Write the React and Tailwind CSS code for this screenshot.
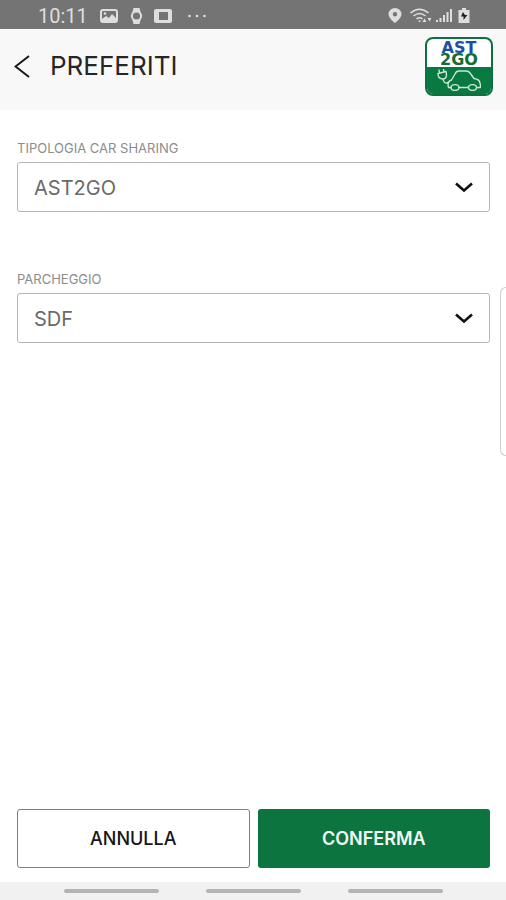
function StatusBar() {
  return (
    <div className="flex h-[29px] shrink-0 items-center justify-between bg-[#747474] pt-[2px] pr-9 pl-[38px] font-[Roboto,sans-serif] text-[#dedede]">
      <div className="flex items-center">
        <span className="w-[62px] text-[20px] leading-6">10:11</span>
        <svg className="h-[14px] w-[18px]" viewBox="0 0 18 14" aria-hidden="true">
          <rect x="1" y="1" width="16" height="12" rx="2" fill="none" stroke="currentColor" strokeWidth="2" />
          <path d="M2 12V10l4-3 3 2 3-4 4 4v3z" fill="currentColor" />
          <circle cx="5" cy="4.500" r="1.300" fill="currentColor" />
        </svg>
        <svg className="ml-3 h-4 w-[13px]" viewBox="0 0 13 16" aria-hidden="true">
          <path d="M3.500 0h6l1 4h-8zM2.500 12h8l-1 4h-6z" fill="currentColor" />
          <circle cx="6.500" cy="8" r="4.600" fill="#747474" stroke="currentColor" strokeWidth="2" />
        </svg>
        <svg className="ml-[11px] h-[14px] w-[18px]" viewBox="0 0 18 14" aria-hidden="true">
          <rect width="18" height="14" rx="2" fill="currentColor" />
          <rect x="5" y="3" width="9" height="8" fill="#747474" />
        </svg>
        <svg className="ml-4 h-1 w-[18px]" viewBox="0 0 18 4" fill="currentColor" aria-hidden="true">
          <circle cx="1.500" cy="2" r="1.300" />
          <circle cx="9" cy="2" r="1.300" />
          <circle cx="16.500" cy="2" r="1.300" />
        </svg>
      </div>
      <div className="flex items-center">
        <svg className="h-[15px] w-[14px]" viewBox="0 0 14 15" aria-hidden="true">
          <path fillRule="evenodd" d="M7 0A6.500 6.200 0 0 0 .5 6.200c0 4 6.500 8.800 6.500 8.800s6.500-4.800 6.500-8.800A6.500 6.200 0 0 0 7 0zm0 4a2.200 2.200 0 1 1 0 4.400A2.200 2.200 0 0 1 7 4z" fill="currentColor" />
        </svg>
        <svg className="ml-[8px] h-4 w-[22px]" viewBox="0 0 22 16" fill="none" stroke="currentColor" strokeWidth="1.600" aria-hidden="true">
          <path d="M.5 5Q9.500-2.500 18.500 5M3.500 8q6-5 12 0M6.500 11q3-2.500 6 0" />
          <path d="M8 12.500h3l-1.500 2zM12.500 14l2-3.500 2 3.500zM17.500 10h4l-2 3.500z" fill="currentColor" stroke="none" />
        </svg>
        <svg className="ml-1 h-[15px] w-[16px]" viewBox="0 0 16 15" fill="currentColor" aria-hidden="true">
          <path d="M0 12h2v2H0zM3.500 10h2v4h-2zM7 7h2v7H7zM10.500 4h2v10h-2zM14 1h2v13h-2z" />
        </svg>
        <svg className="ml-[6px] h-[15px] w-[12px]" viewBox="0 0 12 15" aria-hidden="true">
          <path d="M4 0h4v2h3.500v13H.5V2H4z" fill="currentColor" />
          <path d="M5 4L3 8.500h2.500V12L9.500 7H7z" fill="#222" />
        </svg>
      </div>
    </div>
  );
}

function Logo() {
  return (
    <div className="flex h-[59px] w-[68px] flex-col overflow-hidden rounded-lg border-2 border-[#0c7040] bg-white">
      <div className="flex h-7 flex-col items-center pt-[3px] font-['DejaVu_Sans',sans-serif] text-[16px] leading-3 font-bold">
        <span className="text-[#1c4fa3]">AST</span>
        <span className="text-[#176b35]">2GO</span>
      </div>
      <div className="flex grow items-center justify-center bg-[#087941]">
        <svg className="h-[22px] w-[44px]" viewBox="0 0 44 22" fill="none" stroke="#c9e6d2" strokeWidth="1.400" strokeLinecap="round" strokeLinejoin="round" aria-hidden="true">
          <path d="M1 4.500l8-2c1 4 .5 7.500-3 7.500S1 8 1 4.500zM2.500 4L2 1M7 3l-.5-2.500M6 10c.5 3 2 5 5.500 3.500" />
          <path d="M14 18.500h-2.500c-1-3.500 0-6.500 3-7.500l3.500-6c1-2.500 2-3 4-3h7c2 0 3 .5 4 2l4 5.500c4 .5 6 2.500 6 5l.5 1.500v2.500H40M22 18.500h9.500" />
          <ellipse cx="18" cy="18.500" rx="4" ry="2.900" />
          <ellipse cx="35.500" cy="18.500" rx="4" ry="2.900" />
        </svg>
      </div>
    </div>
  );
}

function SelectField({ id, label, value }) {
  return (
    <div>
      <label htmlFor={id} className="block text-[13px] leading-4 text-[#8c8c8c]">
        {label}
      </label>
      <div className="relative mt-[6px]">
        <select
          id={id}
          defaultValue={value}
          className="block h-[50px] w-full appearance-none rounded-[3px] border border-[#b5b5b5] bg-white px-4 pt-[2px] text-[20px] text-[#6a6a6a]"
        >
          <option>{value}</option>
        </select>
        <svg className="pointer-events-none absolute top-5 right-4 h-[11px] w-[20px]" viewBox="0 0 20 11" fill="none" stroke="#111" strokeWidth="2.600" aria-hidden="true">
          <path d="M2 1.500l8 7 8-7" />
        </svg>
      </div>
    </div>
  );
}

export default function App() {
  return (
    <div className="relative flex min-h-screen flex-col overflow-hidden bg-white font-[Inter,sans-serif]">
      <StatusBar />
      <header className="flex h-[81px] shrink-0 items-center justify-between border-t border-white bg-[#f8f8f8] pr-[13px] pb-2 pl-[14px]">
        <div className="flex items-center gap-5">
          <button type="button" aria-label="Indietro">
            <svg className="h-[23px] w-4" viewBox="0 0 16 23" fill="none" stroke="#181818" strokeWidth="2" aria-hidden="true">
              <path d="M15 1L1.500 11.500 15 22" />
            </svg>
          </button>
          <h1 className="text-[26px] leading-8 text-[#262626]">PREFERITI</h1>
        </div>
        <Logo />
      </header>
      <main className="flex grow flex-col pt-[30px] pr-4 pl-[17px]">
        <div className="flex flex-col gap-[59px]">
          <SelectField id="tipologia" label="TIPOLOGIA CAR SHARING" value="AST2GO" />
          <SelectField id="parcheggio" label="PARCHEGGIO" value="SDF" />
        </div>
        <div className="mt-auto grid grid-cols-2 gap-2 pb-[14px] text-[18px]">
          <button type="button" className="h-[59px] rounded-[3px] border border-[#808080] bg-white font-medium text-[#161616]">
            ANNULLA
          </button>
          <button type="button" className="h-[59px] rounded-[3px] bg-[#0c753f] font-semibold text-[#f2faf5]">
            CONFERMA
          </button>
        </div>
      </main>
      <div className="flex h-[18px] shrink-0 items-center justify-center gap-[47px] bg-[#f1f1f1]">
        <div className="h-1 w-[95px] rounded-full bg-[#b4b4b4]" />
        <div className="h-1 w-[95px] rounded-full bg-[#b4b4b4]" />
        <div className="h-1 w-[95px] rounded-full bg-[#b4b4b4]" />
      </div>
      <div className="absolute top-[287px] right-0 h-[169px] w-[6px] rounded-l-md border border-r-0 border-[#cdcdcd] bg-white" />
    </div>
  );
}
